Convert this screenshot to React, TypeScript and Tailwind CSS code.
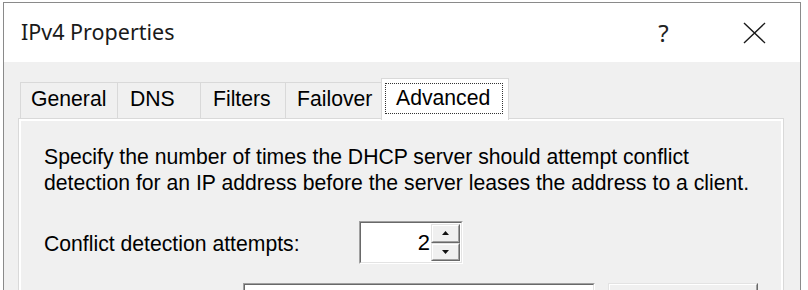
import type { ReactNode } from 'react';

const tabs = [
  { label: 'General', w: 'w-[97px]', pl: 'pl-[10px]' },
  { label: 'DNS', w: 'w-[83px]', pl: 'pl-[12px]' },
  { label: 'Filters', w: 'w-[85px]', pl: 'pl-[12px]' },
  { label: 'Failover', w: 'w-[96px]', pl: 'pl-[11px]' },
];

function TitleBar() {
  return (
    <div className="h-[59px] bg-white flex items-center">
      <div className="flex-1 pl-[17px] pb-[1px] text-[21.5px] text-[#1a1a1a] font-['Noto_Sans','Open_Sans',sans-serif]">
        IPv4 Properties
      </div>
      <div className="w-[91px] h-full flex items-center justify-center text-[24px] text-[#222] font-['Noto_Sans',sans-serif]">
        ?
      </div>
      <div className="w-[91px] h-full flex items-center justify-center">
        <svg width="23" height="22" viewBox="0 0 23 22" fill="none" stroke="#1a1a1a" strokeWidth="1.4">
          <path d="M1 1 L22 21 M22 1 L1 21" />
        </svg>
      </div>
    </div>
  );
}

function Tabs() {
  return (
    <div className="relative z-10 flex items-end h-[42px] -mb-[2px] ml-[2px]">
      {tabs.map((t) => (
        <div
          key={t.label}
          className={`${t.w} ${t.pl} h-[36px] mb-[2px] pb-[4px] flex items-center border-l border-t border-[#d9d9d9] last:border-r`}
        >
          {t.label}
        </div>
      ))}
      <div className="w-[128px] h-[42px] bg-white border-x border-t border-[#d9d9d9] pl-[3px] pr-[5px] pt-[4px] pb-[6px]">
        <div className="h-full border border-dotted border-[#333] flex items-center pl-[10px] pb-[2px]">
          Advanced
        </div>
      </div>
    </div>
  );
}

function SpinButton({ children }: { children: ReactNode }) {
  return (
    <div className="flex-1 border border-t-[#e3e3e3] border-l-[#e3e3e3] border-b-[#696969] border-r-[#696969]">
      <div className="h-full bg-[#f0f0f0] border border-t-white border-l-white border-b-[#a0a0a0] border-r-[#a0a0a0] flex items-center justify-center">
        {children}
      </div>
    </div>
  );
}

function Spinner() {
  return (
    <div className="w-[104px] h-[43px] border border-t-[#a0a0a0] border-l-[#a0a0a0] border-b-white border-r-white">
      <div className="h-full bg-white border border-t-[#696969] border-l-[#696969] border-b-[#e3e3e3] border-r-[#e3e3e3] flex">
        <div className="flex-1 flex items-center justify-end pr-[1px] text-[22px]">2</div>
        <div className="w-[29px] flex flex-col py-[1px] mr-[1px]">
          <SpinButton>
            <svg width="7" height="4" viewBox="0 0 7 4"><polygon points="3.5,0 7,4 0,4" fill="#111" /></svg>
          </SpinButton>
          <SpinButton>
            <svg width="7" height="4" viewBox="0 0 7 4"><polygon points="0,0 7,0 3.5,4" fill="#111" /></svg>
          </SpinButton>
        </div>
      </div>
    </div>
  );
}

function Panel() {
  return (
    <div className="border border-[#d9d9d9] bg-white p-[2px] h-[200px]">
      <div className="h-full bg-[#f0f0f0] pl-[23px] pt-[23px]">
        <p className="leading-[26px]">
          Specify the number of times the DHCP server should attempt conflict
          <br />
          detection for an IP address before the server leases the address to a client.
        </p>
        <div className="flex items-center mt-[25px]">
          <div className="w-[315px] pt-[2px]">Conflict detection attempts:</div>
          <Spinner />
        </div>
        <div className="flex mt-[19px] ml-[199px] gap-[13px]">
          <div className="w-[352px] h-[30px] border border-t-[#a0a0a0] border-l-[#a0a0a0] border-b-white border-r-white">
            <div className="h-full bg-white border border-t-[#696969] border-l-[#696969] border-b-[#e3e3e3] border-r-[#e3e3e3]" />
          </div>
          <div className="w-[150px] h-[30px] border border-t-[#e3e3e3] border-l-[#e3e3e3] border-b-[#696969] border-r-[#696969]">
            <div className="h-full bg-[#f0f0f0] border border-t-white border-l-white border-b-[#a0a0a0] border-r-[#a0a0a0]" />
          </div>
        </div>
      </div>
    </div>
  );
}

export default function App() {
  return (
    <div className="w-[808px] h-[290px] overflow-hidden bg-white text-[21.2px] text-black font-['Liberation_Sans',Arial,sans-serif]">
      <div className="ml-[3px] mt-[2px] w-[798px] h-[330px] border-x border-t border-[#8a8a8a] flex flex-col">
        <TitleBar />
        <div className="flex-1 bg-[#f0f0f0] pl-[14px] pr-[16px] pt-[16px]">
          <Tabs />
          <Panel />
        </div>
      </div>
    </div>
  );
}
